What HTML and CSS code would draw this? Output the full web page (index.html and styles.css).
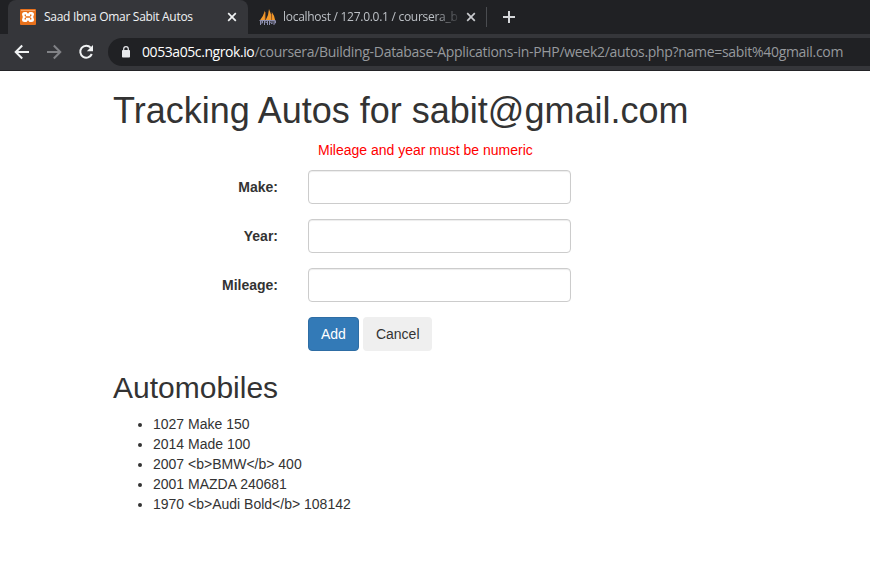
FILE: index.html
```html
<!DOCTYPE html>
<html lang="en">
<head>
<meta charset="utf-8">
<title>Saad Ibna Omar Sabit Autos</title>
<link rel="stylesheet" href="styles.css">
</head>
<body>
<header class="browser">
  <div class="tabs">
    <div class="tab tab-active">
      <svg class="favicon" width="16" height="16" viewBox="0 0 16 16"><rect width="16" height="16" rx="1" fill="#e8711c"/><path d="M1 1.500h14" stroke="#f6a468" stroke-width="1"/><path d="M4.500 3H6.500L8 4.800 9.500 3h2Q14 3 14 5.500L13.200 8l.8 2.500Q14 13 11.500 13h-2L8 11.200 6.500 13h-2Q2 13 2 10.500L2.800 8 2 5.500Q2 3 4.500 3z" fill="#fff"/><path d="M5.300 5.500v1.400M5.300 9.100v1.400M10.700 5.500v1.400M10.700 9.100v1.400M5.300 8h5.400" stroke="#e8711c" stroke-width="1.400"/></svg>
      <span class="tab-title title-autos">Saad Ibna Omar Sabit Autos</span>
      <svg class="close" width="10" height="10" viewBox="0 0 10 10"><path d="M1.200 1.200l7.600 7.600M8.800 1.200L1.200 8.800" stroke="#f1f3f4" stroke-width="1.700"/></svg>
    </div>
    <div class="tab tab-idle">
      <svg class="favicon" width="17" height="16" viewBox="0 0 17 16"><path d="M.8 11.500Q4.500 7 6 1.500v10zM6.500 11.500Q9.800 6 10 0q2.800 5 2.600 11.500zM12.800 11.500V3q3 4 3.400 8.500z" fill="#f39a2b"/><path d="M6.300 11V3M12.600 11V5" stroke="#a65d22" stroke-width=".8" fill="none"/><path d="M.5 11.500h16M1.500 16v-4h2v2h-2M5.500 16v-4l2 2 1-2v4M10.500 16v-4l2.500 3v-3M15 16v-4h1.500v2H15" stroke="#8c8eae" stroke-width="1" fill="none"/></svg>
      <span class="tab-title title-db">localhost / 127.0.0.1 / coursera_b</span>
      <svg class="close" width="10" height="10" viewBox="0 0 10 10"><path d="M1.200 1.200l7.600 7.600M8.800 1.200L1.200 8.800" stroke="#c9cbce" stroke-width="1.700"/></svg>
    </div>
    <i class="divider"></i>
    <svg class="plus" width="12" height="12" viewBox="0 0 12 12"><path d="M6 0v12M0 6h12" stroke="#d5d7da" stroke-width="2"/></svg>
  </div>
  <div class="toolbar">
    <svg class="nav" width="16" height="16" viewBox="0 0 16 16"><path d="M15 8H2.500M8.200 1.500L1.700 8l6.500 6.500" fill="none" stroke="#f1f3f4" stroke-width="2"/></svg>
    <svg class="nav" width="16" height="16" viewBox="0 0 16 16"><path d="M1 8h12.500M7.800 1.500L14.300 8l-6.500 6.500" fill="none" stroke="#818286" stroke-width="2"/></svg>
    <svg class="nav" width="16" height="16" viewBox="0 0 16 16"><path d="M12.700 3.600A6 6 0 1 0 13.800 10" fill="none" stroke="#f1f3f4" stroke-width="2"/><path d="M15 1v6.200H8.800z" fill="#f1f3f4"/></svg>
    <div class="address">
      <svg class="lock" width="8" height="12" viewBox="0 0 8 12"><path d="M1.700 5V3a2.300 2.300 0 0 1 4.600 0v2" fill="none" stroke="#e8eaed" stroke-width="1.200"/><rect y="4" width="8" height="7.500" rx=".8" fill="#e8eaed"/></svg>
      <span class="host">0053a05c.ngrok.io</span><span class="path">/coursera/Building-Database-Applications-in-PHP/week2/autos.php?name=sabit%40gmail.com</span>
    </div>
  </div>
</header>
<main class="container">
  <h1>Tracking Autos for sabit@gmail.com</h1>
  <p class="error">Mileage and year must be numeric</p>
  <form>
    <div class="form-group"><label for="make">Make:</label><input id="make" type="text"></div>
    <div class="form-group"><label for="year">Year:</label><input id="year" type="text"></div>
    <div class="form-group"><label for="mileage">Mileage:</label><input id="mileage" type="text"></div>
    <div class="actions"><button class="btn btn-primary" type="button">Add</button><button class="btn btn-cancel" type="button">Cancel</button></div>
  </form>
  <h2>Automobiles</h2>
  <ul>
    <li>1027 Make 150</li>
    <li>2014 Made 100</li>
    <li>2007 &lt;b&gt;BMW&lt;/b&gt; 400</li>
    <li>2001 MAZDA 240681</li>
    <li>1970 &lt;b&gt;Audi Bold&lt;/b&gt; 108142</li>
  </ul>
</main>
</body>
</html>
```
FILE: styles.css
```css
* { box-sizing: border-box; }
body {
  margin: 0;
  background: #fff;
  color: #333;
  font: 14px/20px "Liberation Sans", Arial, sans-serif;
  overflow: hidden;
}
.browser {
  height: 71px;
  background: #35363a;
  border-bottom: 1px solid #232327;
  font-family: "Open Sans", "Noto Sans", sans-serif;
}
.tabs {
  display: flex;
  align-items: center;
  height: 34px;
  padding-left: 8px;
  background: #202124;
}
.tab {
  display: flex;
  align-items: center;
  height: 34px;
  padding-left: 12px;
}
.tab-active {
  width: 240px;
  background: #35363a;
  border-radius: 8px 8px 0 0;
  color: #f1f3f4;
}
.tab-idle { width: 238px; padding-left: 11px; color: #bdc1c6; }
.favicon { flex: none; margin-right: 8px; }
.tab-idle .favicon { margin-right: 7px; }
.tab-title {
  flex: none;
  font-size: 12px;
  line-height: 16px;
  white-space: nowrap;
}
.title-autos { width: 183px; letter-spacing: -.3px; }
.title-db {
  width: 175px;
  margin-right: 8px;
  letter-spacing: -.28px;
  -webkit-mask-image: linear-gradient(to right, #000 150px, transparent 180px);
  mask-image: linear-gradient(to right, #000 150px, transparent 180px);
}
.close, .plus, .nav, .lock { flex: none; }
.divider { width: 1px; height: 20px; background: #4a4c50; }
.plus { margin-left: 16px; }
.toolbar {
  display: flex;
  align-items: center;
  height: 36px;
  padding-left: 14px;
}
.nav { margin-right: 16px; }
.address {
  display: flex;
  align-items: center;
  flex: 1;
  height: 28px;
  margin-left: -2px;
  padding-left: 14px;
  border-radius: 14px 0 0 14px;
  background: #202124;
  font-size: 14px;
  white-space: nowrap;
}
.lock { margin-right: 12px; }
.host { color: #fff; letter-spacing: -.42px; }
.path { color: #96999d; letter-spacing: -.305px; }
.container { padding: 0 113px; }
h1, h2 { font-weight: 500; line-height: 1.1; margin: 20px 0 10px; }
h1 { font-size: 36px; margin-bottom: 9px; white-space: nowrap; }
h2 { font-size: 30px; }
.error { margin: 0 0 10px 205px; color: #f00; }
.form-group { display: flex; margin-bottom: 15px; }
label {
  width: 165px;
  margin-right: 30px;
  padding-top: 7px;
  font-weight: 700;
  text-align: right;
}
input {
  width: 263px;
  height: 34px;
  border: 1px solid #ccc;
  border-radius: 4px;
  box-shadow: inset 0 1px 1px rgba(0, 0, 0, .075);
}
.actions { display: flex; gap: 4px; margin-left: 195px; }
.btn {
  height: 34px;
  padding: 6px 12px;
  border: 1px solid transparent;
  border-radius: 4px;
  background: #efefef;
  color: #333;
  font: inherit;
}
.btn-primary { background: #337ab7; border-color: #2e6da4; color: #fff; }
.btn-cancel { width: 69px; }
ul { margin: 0; padding-left: 40px; }
```
